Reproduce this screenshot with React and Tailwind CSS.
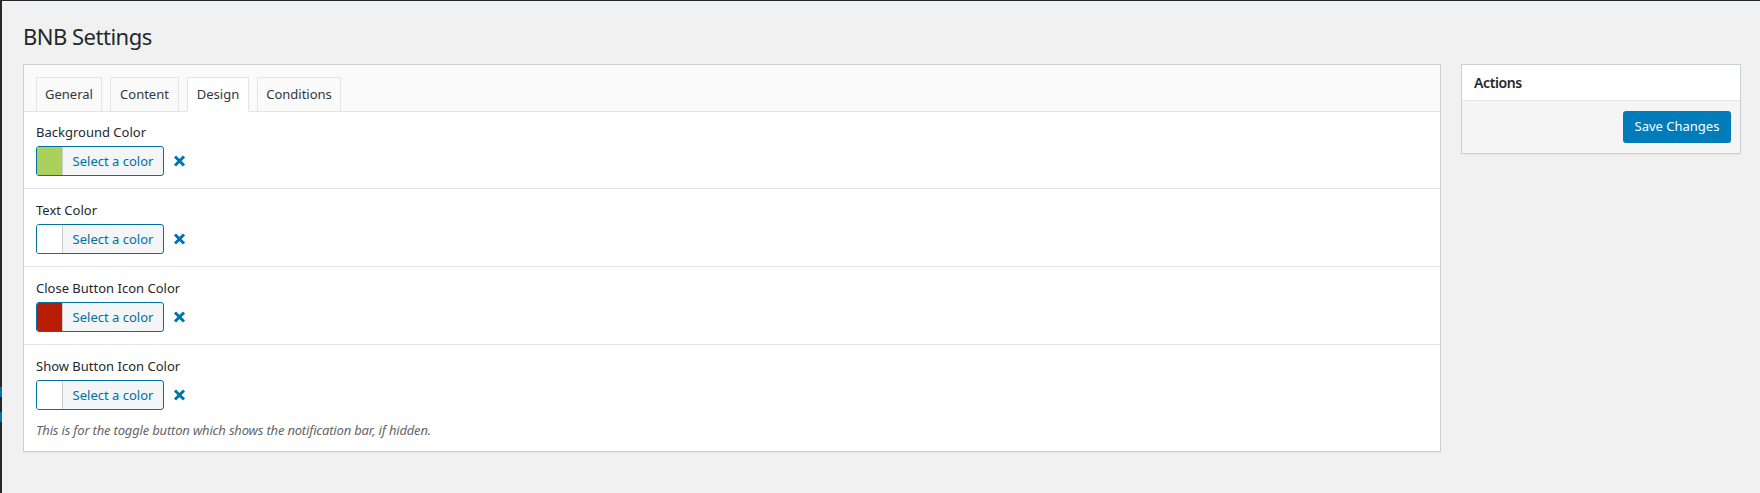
const FONT = { fontFamily: '"Noto Sans", "Open Sans", sans-serif' };

function ClearIcon() {
  return (
    <svg width="13" height="12" viewBox="0 0 13 12" className="ml-[9px] shrink-0">
      <path d="M2 1.5 L11 10.5 M11 1.5 L2 10.5" stroke="#0073aa" strokeWidth="3" strokeLinecap="butt" />
    </svg>
  );
}

function ColorPicker({ color }) {
  return (
    <div className="flex items-center">
      <div className="flex h-[30px] w-[128px] overflow-hidden rounded-[3px] border border-[#0071a1] bg-[#f3f5f6]">
        <div className="w-[26px] shrink-0 border-r border-[#cccccc]" style={{ backgroundColor: color }} />
        <div className="flex flex-1 items-center justify-center text-[13px] leading-none text-[#0071a1]">
          Select a color
        </div>
      </div>
      <ClearIcon />
    </div>
  );
}

function Row({ label, color, first, desc }) {
  return (
    <div
      className={`px-[12px] ${first ? 'pt-[10px]' : 'pt-[11px] border-t border-[#e5e5e5]'} ${
        desc ? 'pb-[11px]' : 'pb-[12px]'
      }`}
    >
      <div className="mb-[4px] text-[13px] leading-[20px] text-[#23282d]">{label}</div>
      <ColorPicker color={color} />
      {desc && (
        <p className="mt-[10px] text-[13px] italic leading-[20px] tracking-[-0.18px] text-[#666666]">{desc}</p>
      )}
    </div>
  );
}

const TABS = [
  { name: 'General', w: 'w-[66px]' },
  { name: 'Content', w: 'w-[69px]' },
  { name: 'Design', w: 'w-[62px]', active: true },
  { name: 'Conditions', w: 'w-[84px]' },
];

export default function App() {
  return (
    <div className="flex min-h-[493px] w-full border-t border-[#23282d] bg-[#f1f1f1]" style={FONT}>
      <div className="flex w-[2px] shrink-0 flex-col bg-[#23282d]">
        <div className="h-[386px]" />
        <div className="h-[10px] bg-[#0073aa]" />
        <div className="h-[15px]" />
        <div className="h-[10px] bg-[#0073aa]" />
      </div>
      <div className="flex-1 pl-[21px] pr-[19px] pt-[20px]">
        <h1 className="text-[22px] font-normal leading-[30px] tracking-[-0.5px] text-[#23282d]">BNB Settings</h1>
        <div className="mt-[13px] flex items-start gap-[20px]">
          <div className="flex-1 border border-[#ccd0d4] bg-white shadow-[0_1px_1px_rgba(0,0,0,0.04)]">
            <div className="flex items-end gap-[8px] border-b border-[#e2e4e7] bg-[#fafafa] px-[12px] pt-[12px]">
              {TABS.map((t) => (
                <div
                  key={t.name}
                  className={`-mb-px flex h-[35px] ${t.w} items-center justify-center border text-[13px] text-[#32373c] ${
                    t.active ? 'border-[#e2e4e7] border-b-white bg-white' : 'border-[#e2e4e7] bg-[#fafafa]'
                  }`}
                >
                  {t.name}
                </div>
              ))}
            </div>
            <Row first label="Background Color" color="#acd05c" />
            <Row label="Text Color" color="#ffffff" />
            <Row label="Close Button Icon Color" color="#b81c04" />
            <Row
              label="Show Button Icon Color"
              color="#ffffff"
              desc="This is for the toggle button which shows the notification bar, if hidden."
            />
          </div>
          <div className="w-[280px] shrink-0 border border-[#ccd0d4] bg-white shadow-[0_1px_1px_rgba(0,0,0,0.04)]">
            <div className="flex h-[36px] items-center border-b border-[#e2e4e7] px-[12px] text-[14px] font-semibold tracking-[-0.4px] text-[#23282d]">
              Actions
            </div>
            <div className="flex justify-end bg-[#f5f5f5] pb-[10px] pr-[9px] pt-[10px]">
              <button className="flex h-[32px] w-[108px] items-center justify-center rounded-[3px] bg-[#007cba] text-[13px] text-white">
                Save Changes
              </button>
            </div>
          </div>
        </div>
      </div>
    </div>
  );
}
